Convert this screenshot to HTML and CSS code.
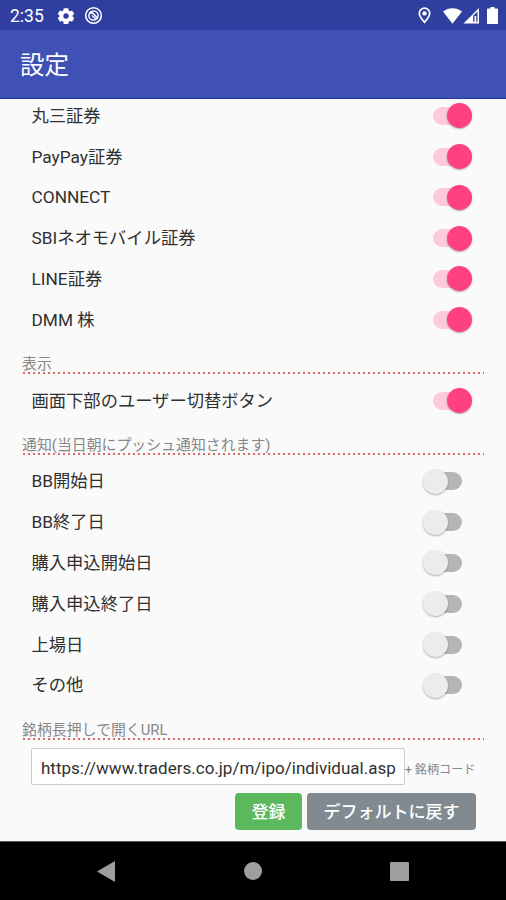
FILE: index.html
```html
<!DOCTYPE html>
<html lang="ja">
<head>
    <meta charset="UTF-8">
    <meta name="viewport" content="width=device-width, initial-scale=1.0">
    <title>設定</title>
    <link rel="stylesheet" href="styles.css">
</head>

<body>

<!-- Status bar -->
<div class="status-bar">
    <span class="time">2:35</span>
    <svg class="gear" width="18" height="18" viewBox="0 0 24 24"><path fill="#fff" fill-rule="evenodd" d="M9 1.500h6l.6 3 1.700 1 2.900-1 2.800 4.700-2.300 2v1.600l2.300 2-2.800 4.700-2.900-1-1.700 1-.6 3H9l-.6-3-1.700-1-2.900 1L1 14.800l2.300-2v-1.600L1 9.200l2.800-4.700 2.900 1 1.700-1zM12 8.400a3.600 3.600 0 1 0 0 7.200 3.600 3.600 0 0 0 0-7.200z"/></svg>
    <svg class="app" width="19" height="19" viewBox="0 0 19 19" fill="none" stroke="#fff"><circle cx="9.500" cy="9.500" r="7.800" stroke-width="1.600"/><circle cx="9.500" cy="9.500" r="4.600" stroke-width="1.500"/><path d="M5.500 7.500c2-1.200 3.500-.5 4.500.8l3.500 4M8 9.500l4 3.500" stroke-width="1.500"/></svg>
    <div class="status-right">
        <svg class="pin" width="13" height="17" viewBox="0 0 13 17"><path fill="none" stroke="#fff" stroke-width="1.700" d="M6.500 15.300C4 12 1.300 9.300 1.300 6.400a5.200 5.200 0 0 1 10.400 0c0 2.900-2.700 5.600-5.200 8.900z"/><circle cx="6.500" cy="6.400" r="2.200" fill="#fff"/></svg>
        <svg class="wifi" width="19" height="16" viewBox="0 0 19 16"><path fill="#fff" d="M0 3.600C5.500-.9 13.500-.9 19 3.600L9.500 15.800z"/></svg>
        <svg class="signal" width="17" height="17" viewBox="0 0 17 17"><path fill="#fff" d="M16 1v15.500H.5z"/><path fill="#303f9f" d="M14.500 4.500v10.300h-1.300V9h-1.700v5.800h-1.300V8.800z"/></svg>
        <svg class="battery" width="11" height="17" viewBox="0 0 11 17"><path fill="#fff" d="M3.500 0h4v1.500H10c.6 0 1 .4 1 1V16c0 .6-.4 1-1 1H1c-.6 0-1-.4-1-1V2.500c0-.6.4-1 1-1h2.500z"/></svg>
    </div>
</div>

<header class="toolbar">設定</header>

<!-- Settings list, scrolled to the bottom -->
<main class="content">
    <div class="row first"><span>丸三証券</span><i class="switch on"></i></div>
    <div class="row"><span>PayPay証券</span><i class="switch on"></i></div>
    <div class="row"><span>CONNECT</span><i class="switch on"></i></div>
    <div class="row"><span>SBIネオモバイル証券</span><i class="switch on"></i></div>
    <div class="row"><span>LINE証券</span><i class="switch on"></i></div>
    <div class="row"><span>DMM 株</span><i class="switch on"></i></div>

    <h2 class="section">表示</h2>
    <div class="row"><span>画面下部のユーザー切替ボタン</span><i class="switch on"></i></div>

    <h2 class="section">通知(当日朝にプッシュ通知されます)</h2>
    <div class="row"><span>BB開始日</span><i class="switch"></i></div>
    <div class="row"><span>BB終了日</span><i class="switch"></i></div>
    <div class="row"><span>購入申込開始日</span><i class="switch"></i></div>
    <div class="row"><span>購入申込終了日</span><i class="switch"></i></div>
    <div class="row"><span>上場日</span><i class="switch"></i></div>
    <div class="row"><span>その他</span><i class="switch"></i></div>

    <h2 class="section">銘柄長押しで開くURL</h2>
    <div class="url-row">
        <div class="url-input">https://www.traders.co.jp/m/ipo/individual.asp</div>
        <span class="url-note">+ 銘柄コード</span>
    </div>
    <div class="buttons">
        <button class="btn save">登録</button>
        <button class="btn reset">デフォルトに戻す</button>
    </div>
</main>

<!-- Navigation bar -->
<nav class="nav-bar">
    <svg width="18" height="21" viewBox="0 0 18 21"><path fill="#9e9e9e" d="M18 0v21L0 10.500z"/></svg>
    <svg width="18" height="18" viewBox="0 0 18 18"><circle cx="9" cy="9" r="9" fill="#9e9e9e"/></svg>
    <svg width="19" height="19" viewBox="0 0 19 19"><rect width="19" height="19" rx="1" fill="#9e9e9e"/></svg>
</nav>

</body>
</html>
```

FILE: styles.css
```css
* {
    box-sizing: border-box;
}
body {
    margin: 0;
    height: 900px;
    display: flex;
    flex-direction: column;
    overflow: hidden;
    background: #fafafa;
    color: #303030;
    font-family: Roboto, "Noto Sans CJK JP", sans-serif;
}
.status-bar {
    display: flex;
    align-items: center;
    height: 30px;
    flex: none;
    padding: 1px 8px 0 10px;
    background: #303f9f;
    color: #fff;
}
.time {
    width: 47px;
    font-size: 17.5px;
}
.app {
    margin-left: 9px;
}
.status-right {
    display: flex;
    align-items: center;
    margin-left: auto;
}
.wifi {
    margin-left: 12px;
}
.signal {
    margin-left: 1px;
}
.battery {
    margin-left: 7px;
}
.toolbar {
    display: flex;
    align-items: center;
    height: 69px;
    flex: none;
    padding: 0 20px 1px;
    background: #3f51b5;
    border-bottom: 1px solid #2438a4;
    color: #fff;
    font-size: 24.5px;
}
.content {
    flex: 1;
    overflow: hidden;
    padding: 0 22px;
}
.row {
    display: flex;
    align-items: center;
    justify-content: space-between;
    height: 40.8px;
    padding: 0 12px 0 9.5px;
    font-size: 17.3px;
    line-height: 24px;
    white-space: nowrap;
}
.row.first {
    margin-top: -3.6px;
}
.switch {
    position: relative;
    width: 39px;
    height: 18px;
    margin-right: 10px;
    border-radius: 9px;
    background: linear-gradient(#b5b5b5, #b5b5b5) right / 34px 18px no-repeat;
}
.switch::after {
    content: "";
    position: absolute;
    top: -3.5px;
    left: 0;
    width: 25px;
    height: 25px;
    border-radius: 50%;
    background: #ececec;
    box-shadow: 0 1px 2px rgba(0, 0, 0, 0.3);
}
.switch.on {
    margin-right: 0;
    background: linear-gradient(#fccadb, #fccadb) left / 34px 18px no-repeat;
}
.switch.on::after {
    left: 14px;
    background: #ff4081;
}
.section {
    height: 40px;
    margin: 0;
    padding-top: 13px;
    background: repeating-linear-gradient(90deg, #d66 0, #d66 2.5px, transparent 2.5px, transparent 5px) 1px 32px / 461px 2px no-repeat;
    color: #888;
    font-size: 14.9px;
    font-weight: normal;
    line-height: 22px;
}
.url-row {
    display: flex;
    align-items: center;
    height: 37px;
    margin: 2.6px 0 8px 9px;
}
.url-input {
    width: 374px;
    height: 37px;
    flex: none;
    padding: 0 8px 0 9px;
    border: 1px solid #ccc;
    border-radius: 2px;
    background: #fff;
    font-size: 17px;
    line-height: 38px;
    white-space: nowrap;
}
.url-note {
    padding-top: 4px;
    color: #888;
    font-size: 12.1px;
    white-space: nowrap;
}
.buttons {
    display: flex;
    justify-content: flex-end;
    gap: 5px;
    padding-right: 8px;
}
.btn {
    height: 37px;
    padding: 0 0 2px;
    border: none;
    border-radius: 4px;
    color: #fff;
    font-family: inherit;
    font-size: 17px;
    font-weight: 500;
}
.save {
    width: 67px;
    background: #5cb85c;
}
.reset {
    width: 169px;
    background: #818a91;
}
.nav-bar {
    display: flex;
    align-items: center;
    justify-content: space-between;
    height: 59px;
    flex: none;
    padding: 0 97px;
    border-top: 1px solid #555;
    background: #000;
}
```
